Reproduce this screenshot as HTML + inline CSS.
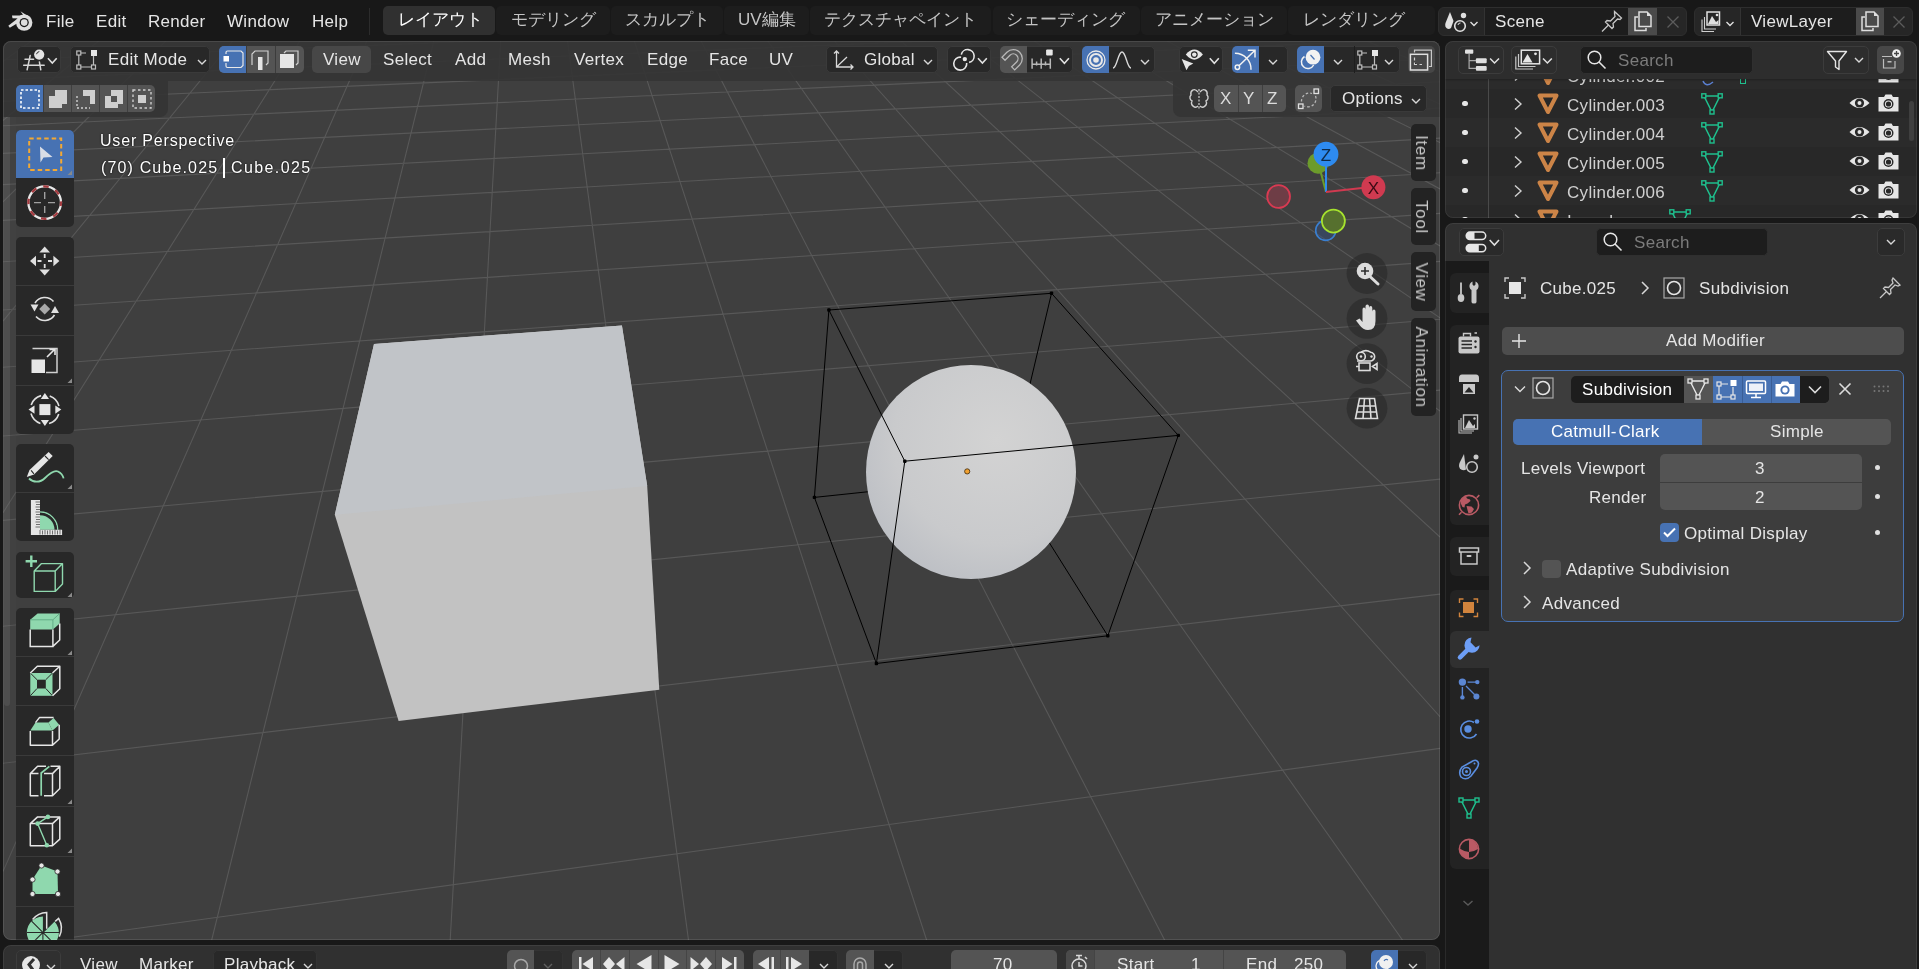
<!DOCTYPE html>
<html><head><meta charset="utf-8">
<style>
*{box-sizing:border-box;margin:0;padding:0}
html,body{width:1919px;height:969px;overflow:hidden;background:#181818;font-family:"Liberation Sans",sans-serif;color:#e5e5e5;font-size:16px}
.a{position:absolute}
.t{position:absolute;white-space:nowrap;line-height:1;font-size:17px;letter-spacing:.3px;will-change:transform}
.jp{font-size:17px;color:#c4c4c4;letter-spacing:0}
.b{position:absolute;border-radius:5px}
.ic{position:absolute;overflow:visible}
#vp{position:absolute;left:3px;top:41px;width:1437px;height:899px;border-radius:8px;background:#3f3f3f;overflow:hidden}
#ol{position:absolute;left:1445px;top:41px;width:472px;height:177px;border-radius:8px;background:#282828;overflow:hidden}
#pr{position:absolute;left:1445px;top:223px;width:472px;height:760px;border-radius:8px;background:#303030;overflow:hidden}
#tl{position:absolute;left:3px;top:945px;width:1437px;height:40px;border-radius:8px;background:#303030;overflow:hidden}
</style></head><body>
<!-- TOPBAR -->
<div id="top">
<svg class="a" style="left:6px;top:9px" width="30" height="24" viewBox="6 9 30 24">
<g fill="#dedede">
<circle cx="24.2" cy="22.6" r="8.2"/>
<path d="M20.5 11.2L30 17.5L27 20.5Z"/>
<path d="M12 15.5L24 15.5L23 18.5L12.5 18.2Z" />
<path d="M8.3 25.8L17 19L19.5 22L9.8 27.8Z"/>
</g>
<circle cx="24.2" cy="22.6" r="4.6" fill="#181818"/>
<circle cx="24.2" cy="22.6" r="3.3" fill="#dedede"/>
</svg>
<div class="t" style="left:46px;top:12.6px">File</div>
<div class="t" style="left:96px;top:12.6px">Edit</div>
<div class="t" style="left:148px;top:12.6px">Render</div>
<div class="t" style="left:227px;top:12.6px">Window</div>
<div class="t" style="left:312px;top:12.6px">Help</div>
<div class="a" style="left:369px;top:8px;width:1px;height:27px;background:#2c2c2c"></div>
<div class="a" style="left:383px;top:6px;width:112px;height:29px;border-radius:5px;background:#303030"></div>
<div class="a" style="left:496px;top:6px;width:114px;height:29px;border-radius:5px;background:#1d1d1d"></div>
<div class="a" style="left:611px;top:6px;width:112px;height:29px;border-radius:5px;background:#1d1d1d"></div>
<div class="a" style="left:724px;top:6px;width:85px;height:29px;border-radius:5px;background:#1d1d1d"></div>
<div class="a" style="left:810px;top:6px;width:181px;height:29px;border-radius:5px;background:#1d1d1d"></div>
<div class="a" style="left:993px;top:6px;width:147px;height:29px;border-radius:5px;background:#1d1d1d"></div>
<div class="a" style="left:1141px;top:6px;width:146px;height:29px;border-radius:5px;background:#1d1d1d"></div>
<div class="a" style="left:1288px;top:6px;width:147px;height:29px;border-radius:5px;background:#1d1d1d"></div>
<div class="t jp" style="left:398px;top:11px;color:#fff">レイアウト</div>
<div class="t jp" style="left:511px;top:11px">モデリング</div>
<div class="t jp" style="left:625px;top:11px">スカルプト</div>
<div class="t jp" style="left:738px;top:11px">UV編集</div>
<div class="t jp" style="left:824px;top:11px">テクスチャペイント</div>
<div class="t jp" style="left:1006px;top:11px">シェーディング</div>
<div class="t jp" style="left:1155px;top:11px">アニメーション</div>
<div class="t jp" style="left:1303px;top:11px">レンダリング</div>
<!-- scene -->
<div class="a" style="left:1438px;top:7.3px;width:249px;height:28.5px;border-radius:6px;background:#262626;border:1px solid #2e2e2e"></div>
<div class="a" style="left:1483.5px;top:8px;width:144.5px;height:27px;background:#1d1d1d;border-left:1px solid #333"></div>
<div class="a" style="left:1628px;top:8px;width:29px;height:27px;background:#4a4a4a"></div>
<svg class="ic" style="left:1442px;top:9px" width="40" height="24" viewBox="0 0 40 24"><path d="M8 3L3.5 14Q2.5 18 5 19.5Q7 20.5 9 19L11.5 12Z" fill="#e0e0e0"/><circle cx="21.5" cy="6.5" r="2.7" fill="#e0e0e0"/><circle cx="18" cy="17" r="5.3" stroke="#e0e0e0" stroke-width="1.6" fill="#262626"/><path d="M16 16A2.3 2.3 0 0 1 18.5 14" stroke="#e0e0e0" stroke-width="1" fill="none"/><path d="M28.5 13L32 16.5L35.5 13" stroke="#e0e0e0" stroke-width="1.4" fill="none"/></svg>
<div class="t" style="left:1495px;top:12.8px">Scene</div>
<svg class="ic" style="left:1600px;top:10px" width="24" height="22" viewBox="0 0 24 22"><path d="M14.5 1.5L21.5 8L20 9.5L17.5 9L13 13.5L13.5 17L12 18.5L5.5 12L7 10.5L10.5 11L15 6.5L14.5 3.5Z" stroke="#c8c8c8" stroke-width="1.3" fill="none"/><path d="M8.5 15L2 21.5" stroke="#c8c8c8" stroke-width="1.3"/></svg>
<svg class="ic" style="left:1632px;top:10px" width="22" height="22" viewBox="0 0 22 22"><path d="M6 7H3V20.5H14V18" stroke="#dedede" stroke-width="1.5" fill="none"/><path d="M7 2H15L19 6V16.5H7Z" stroke="#dedede" stroke-width="1.5" fill="none"/><path d="M15 2V6H19Z" fill="#dedede"/></svg>
<svg class="ic" style="left:1666px;top:15px" width="14" height="14"><path d="M1.5 1.5L12.5 12.5M12.5 1.5L1.5 12.5" stroke="#5c5c5c" stroke-width="1.3"/></svg>
<div class="a" style="left:1694px;top:7.3px;width:219px;height:28.5px;border-radius:6px;background:#262626;border:1px solid #2e2e2e"></div>
<div class="a" style="left:1739.5px;top:8px;width:116px;height:27px;background:#1d1d1d;border-left:1px solid #333"></div>
<div class="a" style="left:1855.5px;top:8px;width:28.5px;height:27px;background:#4a4a4a"></div>
<svg class="ic" style="left:1700px;top:9px" width="40" height="24" viewBox="0 0 40 24"><path d="M4.5 8V20H16M2 10.5V22.5H14" stroke="#cfcfcf" stroke-width="1.1" fill="none"/><rect x="7" y="3" width="12.5" height="13" stroke="#e0e0e0" stroke-width="1.5" fill="none"/><path d="M8 15L12 7L16 13L18.5 11V15Z" fill="#e0e0e0"/><circle cx="17" cy="6" r="1.3" fill="#e0e0e0"/><path d="M26.5 13L30 16.5L33.5 13" stroke="#e0e0e0" stroke-width="1.4" fill="none"/></svg>
<div class="t" style="left:1751px;top:12.8px">ViewLayer</div>
<svg class="ic" style="left:1859px;top:10px" width="22" height="22" viewBox="0 0 22 22"><path d="M6 7H3V20.5H14V18" stroke="#dedede" stroke-width="1.5" fill="none"/><path d="M7 2H15L19 6V16.5H7Z" stroke="#dedede" stroke-width="1.5" fill="none"/><path d="M15 2V6H19Z" fill="#dedede"/></svg>
<svg class="ic" style="left:1892px;top:15px" width="14" height="14"><path d="M1.5 1.5L12.5 12.5M12.5 1.5L1.5 12.5" stroke="#5c5c5c" stroke-width="1.3"/></svg>
</div>
<!-- VIEWPORT -->
<div id="vp">
<svg class="a" style="left:-3px;top:-41px" width="1440" height="940" viewBox="0 0 1440 940">
<path d="M3.0 61.4L31.4 41.0M3.0 120.5L98.6 41.0M3.0 201.8L165.7 41.0M3.0 321.1L232.8 41.0M3.0 512.8L299.9 41.0M3.0 871.6L366.9 41.0M211.7 940.0L433.8 41.0M450.2 940.0L500.7 41.0M688.5 940.0L567.5 41.0M926.6 940.0L634.3 41.0M1164.6 940.0L701.1 41.0M1402.5 940.0L767.8 41.0M1440.0 716.7L834.5 41.0M1440.0 537.1L901.1 41.0M1440.0 411.1L967.6 41.0M1440.0 317.8L1034.2 41.0M1440.0 246.0L1100.6 41.0M1440.0 188.9L1167.1 41.0M1440.0 142.5L1233.4 41.0M1440.0 104.1L1299.8 41.0M1440.0 71.6L1366.1 41.0M1440.0 44.0L1432.3 41.0M52.8 940.0L1440.0 748.4M3.0 763.2L1440.0 594.1M3.0 626.3L1440.0 479.1M3.0 520.4L1440.0 390.1M3.0 436.0L1440.0 319.3M3.0 367.2L1440.0 261.4M3.0 310.0L1440.0 213.4M3.0 261.7L1440.0 172.8M3.0 220.4L1440.0 138.1M3.0 184.6L1440.0 108.1M3.0 153.4L1440.0 81.8M3.0 125.8L1440.0 58.7M3.0 101.4L1375.1 41.0M3.0 79.5L929.7 41.0M5.2 59.8L482.2 41.0M31.4 41.0L32.6 41.0" stroke="#585858" stroke-width="1.1" fill="none"/>
<polygon points="374,344 621.9,325.4 647.2,486 659.3,689.8 398.6,720.9 334.8,514.8" fill="#c2c2c2"/>
<polygon points="374,344 621.9,325.4 647.2,486 334.8,514.8" fill="#c1c4c8"/>
<defs><radialGradient id="sg" cx="0.62" cy="0.35" r="0.75"><stop offset="0" stop-color="#d3d3d3"/><stop offset="0.65" stop-color="#c9cacc"/><stop offset="1" stop-color="#babdc3"/></radialGradient></defs>
<path d="M1051.5 293.3L1008 477M814.4 497.4L1008 477M1107.8 635.8L1008 477" stroke="#000" stroke-width="1" fill="none"/>
<ellipse cx="971" cy="472" rx="105" ry="107.1" fill="url(#sg)"/>
<g stroke="#000" stroke-width="1" fill="none">
<path d="M828.9 310L1051.5 293.3L1178.3 435.4L904.8 461.2Z M814.4 497.4L876.4 663.5L1107.8 635.8 M828.9 310L814.4 497.4 M904.8 461.2L876.4 663.5 M1178.3 435.4L1107.8 635.8"/>
</g><g fill="#000"><rect x="827.1999999999999" y="308.3" width="3.4" height="3.4" rx="1"/><rect x="1049.8" y="291.6" width="3.4" height="3.4" rx="1"/><rect x="1176.6" y="433.7" width="3.4" height="3.4" rx="1"/><rect x="903.0999999999999" y="459.5" width="3.4" height="3.4" rx="1"/><rect x="812.6999999999999" y="495.7" width="3.4" height="3.4" rx="1"/><rect x="874.6999999999999" y="661.8" width="3.4" height="3.4" rx="1"/><rect x="1106.1" y="634.0999999999999" width="3.4" height="3.4" rx="1"/></g><circle cx="967.2" cy="471.4" r="2.6" fill="#f0a030" stroke="#3a2a10" stroke-width="0.8"/>
</svg>
<div class="a" style="left:-3px;top:-41px;width:1919px;height:969px">
<div class="a" style="left:3px;top:41px;width:1437px;height:40px;background:rgba(52,52,52,.9)"></div>
<div class="a" style="left:3px;top:81px;width:165px;height:36px;border-radius:0 0 8px 0;background:rgba(52,52,52,.9)"></div>
<div class="a" style="left:1173px;top:81px;width:267px;height:36px;border-radius:0 0 0 8px;background:rgba(52,52,52,.9)"></div>
<div class="b" style="left:17px;top:46px;width:44px;height:27px;background:#282828;border:1px solid #3a3a3a"></div>
<svg class="ic" style="left:16px;top:45px" width="50" height="30" viewBox="16 45 50 30"><g stroke="#d6d6d6" stroke-width="1.5" fill="none" stroke-linecap="round"><path d="M25 59.2H33.6M23.7 65.3H44.2M30.2 55.5L27.1 69.8M39.4 61.9L40.8 69.8"/></g><circle cx="39.2" cy="54.6" r="5.1" fill="#e4e4e4"/><path d="M36.5 54.2A3.3 3.3 0 0 1 39.3 51.6" stroke="#282828" stroke-width="1" fill="none"/><path d="M47.9 58.3L52.3 63L56.7 58.3" stroke="#e0e0e0" stroke-width="1.6" fill="none"/></svg>

<div class="b" style="left:70px;top:46px;width:140px;height:27px;background:#282828;border:1px solid #3a3a3a"></div>
<svg class="ic" style="left:76px;top:49px" width="22" height="21" viewBox="0 0 22 21"><g stroke="#bdbdbd" stroke-width="1.2" fill="none"><rect x="0.8" y="2" width="4" height="4"/><rect x="0.8" y="16" width="4" height="4"/><rect x="15.5" y="16" width="4" height="4"/><path d="M2.8 6V16M4.8 18H15.5M17.5 7V16M4.8 4H10"/></g><rect x="15" y="1" width="6" height="6" fill="#e6e6e6"/></svg>
<div class="t" style="left:108px;top:51.2px">Edit Mode</div>
<svg class="ic" style="left:197px;top:59px" width="10" height="6"><path d="M1 1L5 5L9 1" stroke="#d8d8d8" stroke-width="1.4" fill="none"/></svg>
<div class="b" style="left:219px;top:46px;width:85px;height:27px;background:#545454"></div>
<div class="b" style="left:219px;top:46px;width:27px;height:27px;border-radius:5px 0 0 5px;background:#4772b3"></div>
<div class="a" style="left:246px;top:46px;width:1px;height:27px;background:#3c3c3c"></div><div class="a" style="left:275px;top:46px;width:1px;height:27px;background:#3c3c3c"></div>
<svg class="ic" style="left:222px;top:49px" width="22" height="21" viewBox="0 0 22 21"><path d="M4 5V3.5Q4 2 5.5 2H19L21 4V16.5L19 18.5H5.5Q4 18.5 4 17V14" stroke="#e8e8e8" stroke-width="1.2" fill="none"/><rect x="1.5" y="7" width="5.5" height="5.5" fill="#fff"/></svg>
<svg class="ic" style="left:249px;top:49px" width="22" height="21" viewBox="0 0 22 21"><path d="M3 16V5L6 2H19V14L17 16" stroke="#d0d0d0" stroke-width="1.2" fill="none"/><rect x="9" y="8" width="4.5" height="13" fill="#e6e6e6"/></svg>
<svg class="ic" style="left:278px;top:49px" width="22" height="21" viewBox="0 0 22 21"><path d="M6 4L8 2H20V14L18 16" stroke="#d0d0d0" stroke-width="1.2" fill="none"/><rect x="2" y="5" width="14" height="14" fill="#e6e6e6"/></svg>
<div class="b" style="left:312px;top:46px;width:59px;height:27px;background:#474747"></div>
<div class="t" style="left:323px;top:51.2px">View</div>
<div class="t" style="left:383px;top:51.2px">Select</div>
<div class="t" style="left:455px;top:51.2px">Add</div>
<div class="t" style="left:508px;top:51.2px">Mesh</div>
<div class="t" style="left:574px;top:51.2px">Vertex</div>
<div class="t" style="left:647px;top:51.2px">Edge</div>
<div class="t" style="left:709px;top:51.2px">Face</div>
<div class="t" style="left:769px;top:51.2px">UV</div>
<div class="b" style="left:826px;top:46px;width:112px;height:27px;background:#282828;border:1px solid #3a3a3a"></div>
<svg class="ic" style="left:832px;top:48px" width="24" height="24" viewBox="0 0 24 24"><g stroke="#d8d8d8" stroke-width="1.3" fill="none"><path d="M4.5 3V19H21M4.5 19L15 9M2 5.5L4.5 3L7 5.5M18.5 16.5L21 19L18.5 21.5"/></g></svg>
<div class="t" style="left:864px;top:51.2px">Global</div>
<svg class="ic" style="left:923px;top:59px" width="10" height="6"><path d="M1 1L5 5L9 1" stroke="#d8d8d8" stroke-width="1.4" fill="none"/></svg>
<div class="b" style="left:947px;top:46px;width:44px;height:27px;background:#282828;border:1px solid #3a3a3a"></div>
<svg class="ic" style="left:945px;top:45px" width="50" height="30" viewBox="945 45 50 30"><g stroke="#e6e6e6" stroke-width="1.6" fill="none"><path d="M961.1 57.2A6.5 6.5 0 1 0 966.7 63"/><path d="M969.1 62.4A6.5 6.5 0 1 0 961.3 54.6"/></g><circle cx="964.8" cy="59.1" r="2.2" fill="#e6e6e6"/><path d="M978 58.3L982.4 63L986.8 58.3" stroke="#e0e0e0" stroke-width="1.6" fill="none"/></svg>

<div class="b" style="left:1000px;top:46px;width:73px;height:27px;background:#282828;border:1px solid #3a3a3a"></div>
<div class="b" style="left:1000px;top:46px;width:27px;height:27px;border-radius:5px 0 0 5px;background:#545454"></div>
<svg class="ic" style="left:998px;top:45px" width="76" height="30" viewBox="998 45 76 30"><path transform="translate(1013.3 58.6) rotate(45)" d="M-9 0A9 9 0 0 1 9 0V7H4.7V0A4.7 4.7 0 0 0 -4.7 0V7H-9Z" stroke="#b8b8b8" stroke-width="1.3" fill="none"/></svg>
<svg class="ic" style="left:1025px;top:45px" width="50" height="30" viewBox="1025 45 50 30"><g stroke="#b8b8b8" stroke-width="1.5"><path d="M1032.1 58.5V68.8M1041.2 58.5V68.8M1050.3 58.5V68.8M1032.1 64.2H1050.3M1036.6 61.6V65.6M1045.5 61.6V65.6"/></g><rect x="1046.1" y="49.4" width="6.6" height="6.1" rx="1" fill="#e6e6e6"/><path d="M1059.8 58.3L1064.4 63.3L1068.9 58.3" stroke="#e0e0e0" stroke-width="1.6" fill="none"/></svg>

<div class="b" style="left:1082px;top:46px;width:73px;height:27px;background:#282828;border:1px solid #3a3a3a"></div>
<div class="b" style="left:1082px;top:46px;width:27px;height:27px;border-radius:5px 0 0 5px;background:#4772b3"></div>
<svg class="ic" style="left:1084px;top:48px" width="24" height="24" viewBox="0 0 24 24"><circle cx="12" cy="12" r="9" stroke="#e8e8e8" stroke-width="1.3" fill="none"/><circle cx="12" cy="12" r="6" stroke="#e8e8e8" stroke-width="2" fill="none"/><circle cx="12" cy="12" r="2.8" fill="#e8e8e8"/></svg>
<svg class="ic" style="left:1111px;top:49px" width="22" height="22" viewBox="0 0 22 22"><path d="M2 19C6 19 7 3 11 3C15 3 16 19 20 19" stroke="#d8d8d8" stroke-width="1.4" fill="none"/></svg>
<svg class="ic" style="left:1140px;top:59px" width="10" height="6"><path d="M1 1L5 5L9 1" stroke="#d8d8d8" stroke-width="1.4" fill="none"/></svg>
<div class="b" style="left:1179px;top:46px;width:44px;height:27px;background:#282828;border:1px solid #3a3a3a"></div>
<svg class="ic" style="left:1175px;top:45px" width="50" height="30" viewBox="1175 45 50 30"><path d="M1185.8 54.6Q1194.3 44.5 1202.9 54.6Q1194.3 64.7 1185.8 54.6Z" fill="#e6e6e6"/><circle cx="1194.3" cy="54.6" r="3.4" fill="#282828"/><circle cx="1194.3" cy="54.6" r="2.2" fill="#e6e6e6"/><path d="M1181.7 58.9L1193.3 63.6L1188.9 66L1186.5 70.2Z" fill="#e6e6e6"/><path d="M1209.8 58.2L1214.3 63.2L1218.8 58.2" stroke="#e0e0e0" stroke-width="1.6" fill="none"/></svg>

<div class="b" style="left:1232px;top:46px;width:56px;height:27px;background:#282828;border:1px solid #3a3a3a"></div>
<div class="b" style="left:1232px;top:46px;width:27px;height:27px;border-radius:5px 0 0 5px;background:#4772b3"></div>
<svg class="ic" style="left:1230px;top:45px" width="30" height="30" viewBox="1230 45 30 30"><g stroke="#f2f2f2" stroke-width="1.5" fill="none"><path d="M1234.9 53.2A16 16 0 0 1 1251 69.8"/><circle cx="1237.4" cy="67.3" r="2.2"/><path d="M1239 65.7L1255 50.3M1247.8 50.3H1255V57.6"/></g></svg>
<svg class="ic" style="left:1268px;top:59px" width="10" height="6"><path d="M1 1L5 5L9 1" stroke="#d8d8d8" stroke-width="1.4" fill="none"/></svg>
<div class="b" style="left:1297px;top:46px;width:103px;height:27px;background:#282828;border:1px solid #3a3a3a"></div>
<div class="b" style="left:1297px;top:46px;width:27px;height:27px;border-radius:5px 0 0 5px;background:#4772b3"></div>
<svg class="ic" style="left:1295px;top:45px" width="30" height="30" viewBox="1295 45 30 30"><circle cx="1313" cy="57.2" r="7.4" fill="#f2f2f2"/><path d="M1310.5 55L1314.5 59.5" stroke="#4772b3" stroke-width="1.2"/><path d="M1304.5 56.5A6.5 6.5 0 1 0 1313.7 65" stroke="#f2f2f2" stroke-width="1.5" fill="none"/></svg>
<svg class="ic" style="left:1333px;top:59px" width="10" height="6"><path d="M1 1L5 5L9 1" stroke="#d8d8d8" stroke-width="1.4" fill="none"/></svg>
<div class="a" style="left:1354px;top:46px;width:1px;height:27px;background:#1e1e1e"></div>
<svg class="ic" style="left:1357px;top:49px" width="22" height="21" viewBox="0 0 22 21"><g stroke="#bdbdbd" stroke-width="1.2" fill="none"><rect x="0.8" y="2" width="4" height="4"/><rect x="0.8" y="16" width="4" height="4"/><rect x="15.5" y="16" width="4" height="4"/><path d="M2.8 6V16M4.8 18H15.5M17.5 7V16M4.8 4H10"/></g><rect x="15" y="1" width="6" height="6" fill="#e6e6e6"/></svg>
<svg class="ic" style="left:1384px;top:59px" width="10" height="6"><path d="M1 1L5 5L9 1" stroke="#d8d8d8" stroke-width="1.4" fill="none"/></svg>
<div class="b" style="left:1408px;top:46px;width:27px;height:27px;background:#474747"></div>
<svg class="ic" style="left:1405px;top:45px" width="30" height="30" viewBox="1405 45 30 30"><path d="M1414.5 52.5V50.2H1431.4V66.5H1429" stroke="#c8c8c8" stroke-width="1.2" fill="none"/><rect x="1410.4" y="54.3" width="17.2" height="15.7" stroke="#e0e0e0" stroke-width="1.5" fill="none"/><path d="M1414.5 57.5V60.5M1414.5 62.5V64.5H1417M1419.5 64.5H1422" stroke="#d0d0d0" stroke-width="1.2"/></svg>
<div class="b" style="left:16px;top:85px;width:139px;height:27px;background:#545454"></div>
<div class="b" style="left:16px;top:85px;width:27px;height:27px;border-radius:5px 0 0 5px;background:#4772b3"></div>
<div class="a" style="left:43px;top:85px;width:1px;height:27px;background:#3f3f3f"></div>
<div class="a" style="left:71px;top:85px;width:1px;height:27px;background:#3f3f3f"></div>
<div class="a" style="left:99px;top:85px;width:1px;height:27px;background:#3f3f3f"></div>
<div class="a" style="left:127px;top:85px;width:1px;height:27px;background:#3f3f3f"></div>
<svg class="ic" style="left:18px;top:87px" width="24" height="24" viewBox="0 0 24 24"><rect x="3" y="3" width="18" height="18" stroke="#fff" stroke-width="1.6" stroke-dasharray="2.5 2" fill="none"/></svg>
<svg class="ic" style="left:46px;top:87px" width="24" height="24" viewBox="0 0 24 24"><path d="M9 3H21V17H16V21H3V9H9Z" fill="#cfcfcf"/></svg>
<svg class="ic" style="left:74px;top:87px" width="24" height="24" viewBox="0 0 24 24"><path d="M9 3H21V17H16V9H9Z" fill="#cfcfcf"/><path d="M3 9V21H16" stroke="#cfcfcf" stroke-width="1.4" stroke-dasharray="2 2" fill="none"/></svg>
<svg class="ic" style="left:102px;top:87px" width="24" height="24" viewBox="0 0 24 24"><path d="M9 3H21V17H16V21H3V9H9ZM9 9V15H15V9Z" fill="#cfcfcf" fill-rule="evenodd"/></svg>
<svg class="ic" style="left:130px;top:87px" width="24" height="24" viewBox="0 0 24 24"><rect x="3" y="3" width="18" height="18" stroke="#cfcfcf" stroke-width="1.4" stroke-dasharray="2.5 2.5" fill="none"/><rect x="8" y="8" width="8" height="8" fill="#cfcfcf"/></svg>
<svg class="ic" style="left:1187px;top:87px" width="24" height="24" viewBox="0 0 24 24"><path d="M11 5C7 0 3 4 4 8C2 10 3 13 5 14C3 18 8 22 11 19M13 5C17 0 21 4 20 8C22 10 21 13 19 14C21 18 16 22 13 19" stroke="#cfcfcf" stroke-width="1.4" fill="none"/><path d="M12 2V22" stroke="#cfcfcf" stroke-width="1.2" stroke-dasharray="2 1.5"/></svg>
<div class="b" style="left:1214px;top:85px;width:72px;height:27px;background:#545454"></div>
<div class="a" style="left:1238px;top:85px;width:1px;height:27px;background:#3f3f3f"></div><div class="a" style="left:1262px;top:85px;width:1px;height:27px;background:#3f3f3f"></div>
<div class="t" style="left:1220px;top:89.5px;color:#dcdcdc">X</div>
<div class="t" style="left:1243px;top:89.5px;color:#dcdcdc">Y</div>
<div class="t" style="left:1267px;top:89.5px;color:#dcdcdc">Z</div>
<div class="b" style="left:1295px;top:85px;width:27px;height:27px;background:#545454"></div>
<svg class="ic" style="left:1295px;top:85px" width="28" height="28" viewBox="1295 85 28 28"><rect x="1298.5" y="104" width="4.5" height="4.5" stroke="#e0e0e0" stroke-width="1.3" fill="none"/><rect x="1314" y="89" width="4.5" height="4.5" stroke="#e0e0e0" stroke-width="1.3" fill="none"/><path d="M1301.5 101.5A8 8 0 0 1 1312 93.5M1315.5 96A8 8 0 0 1 1304.5 106" stroke="#b8b8b8" stroke-width="1.3" stroke-dasharray="2.5 2" fill="none"/></svg>
<div class="b" style="left:1330px;top:85px;width:97px;height:27px;background:#282828;border:1px solid #3a3a3a"></div>
<div class="t" style="left:1342px;top:89.5px">Options</div>
<svg class="ic" style="left:1411px;top:98px" width="10" height="6"><path d="M1 1L5 5L9 1" stroke="#d8d8d8" stroke-width="1.4" fill="none"/></svg>
</div>
<div class="a" style="left:-3px;top:-41px;width:1919px;height:969px">
<div class="a" style="left:3px;top:117px;width:13px;height:823px;background:rgba(70,70,70,.25)"></div>
<div class="a" style="left:4px;top:117px;width:6px;height:589px;border-radius:0 0 3px 3px;background:rgba(255,255,255,.07)"></div>
<div class="b" style="left:16px;top:130px;width:58px;height:97px;background:#282828"></div>
<div class="b" style="left:16px;top:130px;width:58px;height:48px;border-radius:5px 5px 0 0;background:#4772b3"></div>
<div class="b" style="left:16px;top:237px;width:58px;height:197px;background:#282828"></div><div class="a" style="left:16px;top:285px;width:58px;height:1px;background:#3a3a3a"></div><div class="a" style="left:16px;top:335px;width:58px;height:1px;background:#3a3a3a"></div><div class="a" style="left:16px;top:385px;width:58px;height:1px;background:#3a3a3a"></div>
<div class="b" style="left:16px;top:444px;width:58px;height:97px;background:#282828"></div><div class="a" style="left:16px;top:492px;width:58px;height:1px;background:#3a3a3a"></div>
<div class="b" style="left:16px;top:552px;width:58px;height:46px;background:#282828"></div>
<div class="b" style="left:16px;top:608px;width:58px;height:340px;background:#282828"></div>
<div class="a" style="left:16px;top:656px;width:58px;height:1px;background:#3a3a3a"></div>
<div class="a" style="left:16px;top:705px;width:58px;height:1px;background:#3a3a3a"></div>
<div class="a" style="left:16px;top:755px;width:58px;height:1px;background:#3a3a3a"></div>
<div class="a" style="left:16px;top:806px;width:58px;height:1px;background:#3a3a3a"></div>
<div class="a" style="left:16px;top:856px;width:58px;height:1px;background:#3a3a3a"></div>
<div class="a" style="left:16px;top:906px;width:58px;height:1px;background:#3a3a3a"></div>
<svg class="a" style="left:0;top:0" width="80" height="940" viewBox="0 0 80 940">
<rect x="29.2" y="138.4" width="32" height="31.5" stroke="#f3a833" stroke-width="2" stroke-dasharray="4.5 3" fill="none"/>
<path d="M40 146.5L52.5 157L43.5 157.5L40.5 162.5Z" fill="#d9dde6"/>
<path d="M72 175L67.5 175L72 170.5Z" fill="#8a8a8a"/>
<circle cx="44.7" cy="202.6" r="16.3" stroke="#e8e8e8" stroke-width="2.3" fill="none"/>
<circle cx="44.7" cy="202.6" r="16.3" stroke="#a43a3f" stroke-width="2.3" stroke-dasharray="5.6 7.2" stroke-dashoffset="2" fill="none"/>
<path d="M44.7 192V199M44.7 206V213M34 202.6H41M48 202.6H55" stroke="#a0a0a0" stroke-width="1.4"/>
<g fill="#e0e0e0"><path d="M44.7 246.5L50 252.5H39.4Z"/><path d="M44.7 275.5L50 269.5H39.4Z"/><path d="M30 261L36 255.7V266.3Z"/><path d="M59.4 261L53.4 255.7V266.3Z"/></g>
<path d="M44.7 254V258M44.7 264V268M37.5 261H41.5M48 261H52" stroke="#e0e0e0" stroke-width="1.8"/>
<path d="M44.7 303.5L50.2 309L44.7 314.5L39.2 309Z" fill="#a8a8a8"/>
<path d="M35 303A11.5 11.5 0 0 1 53.5 301.5M54.5 315A11.5 11.5 0 0 1 36 316.5" stroke="#e0e0e0" stroke-width="1.6" fill="none"/>
<path d="M30.5 304.5H38.5L34.5 311.5Z" fill="#e0e0e0"/><path d="M51 313H59L55 306Z" fill="#e0e0e0"/>
<path d="M32.5 348.5H57V372.5H46" stroke="#d0d0d0" stroke-width="1.5" fill="none"/>
<rect x="31.5" y="359.5" width="13.5" height="13.5" fill="#e6e6e6"/>
<path d="M47 357L54.5 349.5M49.5 349.5H55V355" stroke="#e6e6e6" stroke-width="1.6" fill="none"/>
<path d="M72 383L67.5 383L72 378.5Z" fill="#8a8a8a"/>
<circle cx="44.9" cy="409.6" r="14.5" stroke="#e0e0e0" stroke-width="1.6" stroke-dasharray="14 8.8" stroke-dashoffset="-4.4" fill="none"/>
<rect x="39.4" y="404.1" width="11" height="11" fill="#e6e6e6"/>
<g fill="#e6e6e6"><path d="M44.9 393L49 399H40.8Z"/><path d="M44.9 426L49 420H40.8Z"/><path d="M28.5 409.6L34.5 405.5V413.7Z"/><path d="M61.3 409.6L55.3 405.5V413.7Z"/></g>
<path d="M26.8 477.1L29.5 470L48.6 451.9L52.7 455.9L34 474.5Z" fill="#e6e6e6"/><path d="M31.1 470.3L33.9 473.9M45 456L48.6 459.6" stroke="#282828" stroke-width="1.1"/>
<path d="M29 478.5C33 482.5 40 483 45 478C50 473 55 470 58 471.5C61 473 63 476 63.6 478.4" stroke="#8fd8ae" stroke-width="1.8" fill="none"/>
<path d="M72 489L67.5 489L72 484.5Z" fill="#8a8a8a"/>
<path d="M40 515.2A14.5 14.5 0 0 1 54.5 529.7H40Z" fill="#8fd8ae"/>
<path d="M40 512A17.7 17.7 0 0 1 57.7 529.7" stroke="#8fd8ae" stroke-width="1.3" fill="none"/>
<path d="M40 513.5A16.2 16.2 0 0 1 56.2 529.7" stroke="#282828" stroke-width="1.4" fill="none"/>
<path d="M30.9 499.9H40V529.7H62.1V535H30.9Z" fill="#e6e6e6"/>
<path d="M35.5 502H40M36 504.5H40M35.5 507H40M36 509.5H40M35.5 512H40M36 514.5H40M35.5 517H40M36 519.5H40M35.5 522H40M36 524.5H40M35.5 527H40M40 534.5V530M42.5 534.5V530.5M45 534.5V530M47.5 534.5V530.5M50 534.5V530M52.5 534.5V530.5M55 534.5V530M57.5 534.5V530.5M60 534.5V530" stroke="#3a3a3a" stroke-width="0.7"/>
<path d="M34.2 571H55.2V591.4H34.2Z M34.2 571L41.5 563.6H62.5L55.2 571 M62.5 563.6V584.0L55.2 591.4" stroke="#8fd8ae" stroke-width="1.4" stroke-linejoin="round" fill="none"/>
<path d="M25.6 561.3H37M31.3 555.6V567" stroke="#8fd8ae" stroke-width="2.4"/>
<path d="M72 597L67.5 597L72 592.5Z" fill="#8a8a8a"/>
<path d="M30.2 629.4V619.8L37.6 613.5H59.7V623.5L52.9 629.4Z" fill="#8fd8ae"/><path d="M30.2 619.8H52.9V629.4M52.9 619.8L59.7 613.5" stroke="#5fa882" stroke-width="0.9" fill="none"/>
<path d="M30.2 629.4V646.4H52.9V629.4M52.9 646.4L59.7 640V623.5" stroke="#e6e6e6" stroke-width="1.5" fill="none"/>
<path d="M72 655L67.5 655L72 650.5Z" fill="#8a8a8a"/>
<rect x="30.3" y="673" width="22.2" height="22.8" fill="#8fd8ae"/><rect x="37" y="679.7" width="8.8" height="8.8" fill="#282828"/>
<path d="M30.3 673L37 679.7M52.5 673L45.8 679.7M30.3 695.8L37 688.5M52.5 695.8L45.8 688.5" stroke="#282828" stroke-width="1"/>
<path d="M30.3 673L37.3 666.3H59.8L52.5 673M59.8 666.3V688.8L52.5 695.8" stroke="#e6e6e6" stroke-width="1.5" stroke-linejoin="round" fill="none"/>
<path d="M30.3 730.5L35.5 722.6H48.4L52.5 730.5Z" fill="#8fd8ae"/><path d="M48.4 722.6L53.6 718L59.2 724.7L52.5 730.5Z" fill="#8fd8ae"/>
<path d="M30.3 731V745.3H52.5V731M52.5 745.3L59.2 739V724.7M35.5 722.6L39.6 717.4H53.6" stroke="#e6e6e6" stroke-width="1.5" stroke-linejoin="round" fill="none"/>
<path d="M38.5 773.6H30.3V795.8H38.5M44 795.8H52.5V773.6H44M30.3 773.6L37.6 766.3H46M50.5 766.3H59.8L52.5 773.6M59.8 766.3V788.5L52.5 795.8" stroke="#e6e6e6" stroke-width="1.5" stroke-linejoin="round" fill="none"/>
<path d="M41.2 795.8V773L49.4 766.3" stroke="#8fd8ae" stroke-width="1.7" fill="none"/>
<path d="M72 804L67.5 804L72 799.5Z" fill="#8a8a8a"/>
<path d="M30.3 823.6H52.5V845.8H30.3Z M30.3 823.6L37.6 816.9H59.8L52.5 823.6 M59.8 816.9V839.0999999999999L52.5 845.8" stroke="#e6e6e6" stroke-width="1.5" stroke-linejoin="round" fill="none"/>
<path d="M47.9 816.9L37.6 823.6L46.8 845.3" stroke="#8fd8ae" stroke-width="1.4" fill="none"/>
<g fill="#8fd8ae"><circle cx="47.9" cy="816.9" r="2.3"/><circle cx="37.6" cy="823.6" r="2.3"/><circle cx="46.8" cy="845.3" r="2.3"/></g>
<path d="M72 853L67.5 853L72 848.5Z" fill="#8a8a8a"/>
<path d="M41.5 865.5L57.5 871.5L58 894H32.5L32.5 879.5Z" fill="#8fd8ae"/>
<g fill="#e6e6e6" stroke="#282828" stroke-width="0.8"><circle cx="41.5" cy="865.5" r="2.6"/><circle cx="57.5" cy="871.5" r="2.6"/><circle cx="58" cy="894" r="2.6"/><circle cx="32.5" cy="894" r="2.6"/><circle cx="32.5" cy="879.5" r="2.6"/></g>
<path d="M42.9 932.5V916.5A16 16 0 1 0 54.2 921.2Z" fill="#8fd8ae"/>
<path d="M27 932.5H59M31.6 921.2L54.2 943.8M54.2 921.2L31.6 943.8M42.9 932.5V945" stroke="#282828" stroke-width="1.1"/>
<path d="M32.6 919.5A19 19 0 0 1 46.7 912.5V928.7" stroke="#e0e0e0" stroke-width="1.5" fill="none"/>
<path d="M55.2 921.4L58.6 918.4A19 19 0 0 1 59.3 936.7" stroke="#e0e0e0" stroke-width="1.5" fill="none"/>
</svg>
</div>
<div class="a" style="left:-3px;top:-41px;width:1919px;height:969px">
<div class="t" style="left:100px;top:133.3px;font-size:16px;letter-spacing:.82px;color:#fff;text-shadow:0 0 2px #000">User Perspective</div>
<div class="t" style="left:100.5px;top:160.1px;font-size:16px;letter-spacing:1.15px;color:#fff;text-shadow:0 0 2px #000">(70) Cube.025</div><div class="t" style="left:230.5px;top:160.1px;font-size:16px;letter-spacing:1.4px;color:#fff;text-shadow:0 0 2px #000">Cube.025</div>
<div class="a" style="left:223px;top:158px;width:2px;height:20px;background:#fff"></div>
<svg class="a" style="left:1240px;top:120px" width="200" height="320" viewBox="1240 120 200 320">
<circle cx="1325.7" cy="230.4" r="10" fill="rgba(50,80,130,.45)" stroke="#3a7fd0" stroke-width="1.6"/>
<circle cx="1333.4" cy="221.1" r="11.5" fill="#56702e" stroke="#a6e22e" stroke-width="1.8"/>
<circle cx="1278.6" cy="196.5" r="11.4" fill="#6e3d46" stroke="#d93a52" stroke-width="1.8"/>
<circle cx="1318" cy="163.2" r="10.5" fill="#6c9b2b"/>
<path d="M1326 192L1320.7 172" stroke="#6c9b2b" stroke-width="2"/>
<path d="M1326 192V165" stroke="#2e8bf0" stroke-width="2"/>
<path d="M1326 192L1362 188" stroke="#d03a50" stroke-width="2.2"/>
<circle cx="1326" cy="154.2" r="12.4" fill="#2e8bf0"/>
<circle cx="1373.4" cy="187.2" r="12" fill="#d03a50"/>
<text x="1326" y="160.5" text-anchor="middle" font-family="Liberation Sans" font-size="17" fill="#0f2a48">Z</text>
<text x="1373.4" y="193.5" text-anchor="middle" font-family="Liberation Sans" font-size="17" fill="#3a0a14">X</text>
<circle cx="1367" cy="273.5" r="20.4" fill="rgba(38,38,38,.55)"/>
<circle cx="1367" cy="318.4" r="20.4" fill="rgba(38,38,38,.55)"/>
<circle cx="1367" cy="363.6" r="20.4" fill="rgba(38,38,38,.55)"/>
<circle cx="1367" cy="408.2" r="20.4" fill="rgba(38,38,38,.55)"/>
<circle cx="1365" cy="271" r="8.3" fill="#dcdcdc"/><path d="M1370.5 277L1378 284" stroke="#dcdcdc" stroke-width="3" stroke-linecap="round"/><path d="M1361 271H1369M1365 267V275" stroke="#2c2c2c" stroke-width="1.6"/>
<path d="M1356 320.5L1359.5 318.5L1362.5 322V309.5Q1362.5 307.5 1364 307.5Q1365.5 307.5 1365.5 309.5V306.5Q1365.5 304.5 1367.3 304.5Q1369 304.5 1369 306.5V308Q1369 306 1370.7 306Q1372.3 306 1372.3 308V311.5Q1372.5 309.5 1374 309.5Q1375.5 309.5 1375.5 311.5V321Q1375.5 330 1368 330Q1363 330 1359.5 325Z" fill="#dcdcdc"/>
<g stroke="#dcdcdc" stroke-width="1.6" fill="none"><circle cx="1361" cy="356.5" r="4.3"/><path d="M1361 352.2Q1366 349 1370.5 352.2A4.3 4.3 0 1 1 1370 361H1357"/><rect x="1359" y="363" width="11" height="7.5"/><path d="M1356 366.5H1359M1372.5 366.5L1377 363.5V369.5Z"/></g><circle cx="1361" cy="356.5" r="1.2" fill="#dcdcdc"/><circle cx="1371.5" cy="356.5" r="1.2" fill="#dcdcdc"/>
<g stroke="#dcdcdc" stroke-width="1.6" fill="none"><path d="M1359.5 398.5H1374.5L1377.5 418.5H1355.5Z M1358 406H1376 M1357 412H1377 M1364.5 398.5L1363 418.5 M1369.5 398.5L1371 418.5"/></g>
</svg>
<div class="b" style="left:1410.5px;top:124px;width:25.5px;height:57px;background:#232323"></div>
<div class="t" style="left:1429.5px;top:152.5px;transform:translate(-50%,0) rotate(90deg);transform-origin:50% 0;font-size:17px;color:#c8c8c8;letter-spacing:.6px">Item</div>
<div class="b" style="left:1410.5px;top:188px;width:25.5px;height:57px;background:#232323"></div>
<div class="t" style="left:1429.5px;top:216.5px;transform:translate(-50%,0) rotate(90deg);transform-origin:50% 0;font-size:17px;color:#c8c8c8;letter-spacing:.6px">Tool</div>
<div class="b" style="left:1410.5px;top:252px;width:25.5px;height:59px;background:#232323"></div>
<div class="t" style="left:1429.5px;top:281.5px;transform:translate(-50%,0) rotate(90deg);transform-origin:50% 0;font-size:17px;color:#c8c8c8;letter-spacing:.6px">View</div>
<div class="b" style="left:1410.5px;top:318px;width:25.5px;height:98px;background:#232323"></div>
<div class="t" style="left:1429.5px;top:367.0px;transform:translate(-50%,0) rotate(90deg);transform-origin:50% 0;font-size:17px;color:#c8c8c8;letter-spacing:.6px">Animation</div>
</div>
</div>
<div class="a" style="left:3px;top:41px;width:1437px;height:899px;border-radius:8px;border:1px solid rgba(255,255,255,.1);z-index:5"></div>
<div class="a" style="left:1445px;top:41px;width:472px;height:177px;border-radius:8px;border:1px solid rgba(255,255,255,.07);z-index:5"></div>
<div class="a" style="left:1445px;top:223px;width:472px;height:760px;border-radius:8px;border:1px solid rgba(255,255,255,.07);z-index:5"></div>
<div class="a" style="left:3px;top:945px;width:1437px;height:40px;border-radius:8px;border:1px solid rgba(255,255,255,.07);z-index:5"></div>
<div id="ol"><div class="a" style="left:-1445px;top:-41px;width:1919px;height:969px">
<div class="a" style="left:1445px;top:60px;width:472px;height:29px;background:#2b2b2b"></div>
<div class="a" style="left:1445px;top:89px;width:472px;height:29px;background:#282828"></div>
<div class="a" style="left:1445px;top:118px;width:472px;height:29px;background:#2b2b2b"></div>
<div class="a" style="left:1445px;top:147px;width:472px;height:29px;background:#282828"></div>
<div class="a" style="left:1445px;top:176px;width:472px;height:29px;background:#2b2b2b"></div>
<div class="a" style="left:1445px;top:205px;width:472px;height:29px;background:#282828"></div>
<div class="a" style="left:1488px;top:79px;width:1px;height:140px;background:#4a4a4a"></div>
<div class="a" style="left:1462px;top:71.7px;width:5.6px;height:5.6px;border-radius:50%;background:#e6e6e6"></div>
<svg class="ic" style="left:1513px;top:67.5px" width="10" height="14"><path d="M2 1.5L8 7L2 12.5" stroke="#d0d0d0" stroke-width="1.4" fill="none"/></svg>
<svg class="ic" style="left:1537px;top:64.0px" width="22" height="21" viewBox="0 0 22 21"><path d="M2.5 2.5H19.5L11 19Z" stroke="#cc8447" stroke-width="4" stroke-linejoin="round" fill="none"/></svg>
<div class="t" style="left:1567px;top:67.7px;color:#d0d0d0">Cylinder.002</div>
<svg class="ic" style="left:1700px;top:78.5px" width="20" height="10"><path d="M3 2Q6 9 13 3" stroke="#5a7fd0" stroke-width="1.5" fill="none"/></svg>
<div class="a" style="left:1740px;top:78.0px;width:6px;height:6px;border:1.5px solid #1fbf8d"></div>
<svg class="ic" style="left:1849px;top:64.0px" width="22" height="20" viewBox="0 0 22 20"><path d="M0.5 10Q10.5 0 20.5 10Q10.5 20 0.5 10Z" fill="#e6e6e6"/><circle cx="10.5" cy="10" r="4.6" fill="#282828"/><circle cx="10.5" cy="10" r="2" fill="#e6e6e6"/></svg>
<svg class="ic" style="left:1878px;top:64.0px" width="22" height="20" viewBox="0 0 22 20"><path d="M0.5 4H6L7.5 1.5H13.5L15 4H20.5V18.5H0.5Z" fill="#e6e6e6"/><circle cx="10.5" cy="11" r="5" fill="#282828"/><circle cx="10.5" cy="11" r="3.6" fill="#e6e6e6"/><circle cx="10.5" cy="11" r="2.6" fill="#282828"/></svg>
<div class="a" style="left:1462px;top:100.7px;width:5.6px;height:5.6px;border-radius:50%;background:#e6e6e6"></div>
<svg class="ic" style="left:1513px;top:96.5px" width="10" height="14"><path d="M2 1.5L8 7L2 12.5" stroke="#d0d0d0" stroke-width="1.4" fill="none"/></svg>
<svg class="ic" style="left:1537px;top:93.0px" width="22" height="21" viewBox="0 0 22 21"><path d="M2.5 2.5H19.5L11 19Z" stroke="#cc8447" stroke-width="4" stroke-linejoin="round" fill="none"/></svg>
<div class="t" style="left:1567px;top:96.7px;color:#d0d0d0">Cylinder.003</div>
<svg class="ic" style="left:1701px;top:92.5px" width="22" height="22" viewBox="0 0 22 22"><path d="M3 3H19L11 19Z" stroke="#1fbf8d" stroke-width="1.5" fill="none"/><g fill="#282828" stroke="#1fbf8d" stroke-width="1.4"><rect x="0.8" y="0.8" width="4" height="4"/><rect x="17.2" y="0.8" width="4" height="4"/><rect x="9" y="17" width="4" height="4"/></g></svg>
<svg class="ic" style="left:1849px;top:93.0px" width="22" height="20" viewBox="0 0 22 20"><path d="M0.5 10Q10.5 0 20.5 10Q10.5 20 0.5 10Z" fill="#e6e6e6"/><circle cx="10.5" cy="10" r="4.6" fill="#282828"/><circle cx="10.5" cy="10" r="2" fill="#e6e6e6"/></svg>
<svg class="ic" style="left:1878px;top:93.0px" width="22" height="20" viewBox="0 0 22 20"><path d="M0.5 4H6L7.5 1.5H13.5L15 4H20.5V18.5H0.5Z" fill="#e6e6e6"/><circle cx="10.5" cy="11" r="5" fill="#282828"/><circle cx="10.5" cy="11" r="3.6" fill="#e6e6e6"/><circle cx="10.5" cy="11" r="2.6" fill="#282828"/></svg>
<div class="a" style="left:1462px;top:129.7px;width:5.6px;height:5.6px;border-radius:50%;background:#e6e6e6"></div>
<svg class="ic" style="left:1513px;top:125.5px" width="10" height="14"><path d="M2 1.5L8 7L2 12.5" stroke="#d0d0d0" stroke-width="1.4" fill="none"/></svg>
<svg class="ic" style="left:1537px;top:122.0px" width="22" height="21" viewBox="0 0 22 21"><path d="M2.5 2.5H19.5L11 19Z" stroke="#cc8447" stroke-width="4" stroke-linejoin="round" fill="none"/></svg>
<div class="t" style="left:1567px;top:125.7px;color:#d0d0d0">Cylinder.004</div>
<svg class="ic" style="left:1701px;top:121.5px" width="22" height="22" viewBox="0 0 22 22"><path d="M3 3H19L11 19Z" stroke="#1fbf8d" stroke-width="1.5" fill="none"/><g fill="#282828" stroke="#1fbf8d" stroke-width="1.4"><rect x="0.8" y="0.8" width="4" height="4"/><rect x="17.2" y="0.8" width="4" height="4"/><rect x="9" y="17" width="4" height="4"/></g></svg>
<svg class="ic" style="left:1849px;top:122.0px" width="22" height="20" viewBox="0 0 22 20"><path d="M0.5 10Q10.5 0 20.5 10Q10.5 20 0.5 10Z" fill="#e6e6e6"/><circle cx="10.5" cy="10" r="4.6" fill="#282828"/><circle cx="10.5" cy="10" r="2" fill="#e6e6e6"/></svg>
<svg class="ic" style="left:1878px;top:122.0px" width="22" height="20" viewBox="0 0 22 20"><path d="M0.5 4H6L7.5 1.5H13.5L15 4H20.5V18.5H0.5Z" fill="#e6e6e6"/><circle cx="10.5" cy="11" r="5" fill="#282828"/><circle cx="10.5" cy="11" r="3.6" fill="#e6e6e6"/><circle cx="10.5" cy="11" r="2.6" fill="#282828"/></svg>
<div class="a" style="left:1462px;top:158.7px;width:5.6px;height:5.6px;border-radius:50%;background:#e6e6e6"></div>
<svg class="ic" style="left:1513px;top:154.5px" width="10" height="14"><path d="M2 1.5L8 7L2 12.5" stroke="#d0d0d0" stroke-width="1.4" fill="none"/></svg>
<svg class="ic" style="left:1537px;top:151.0px" width="22" height="21" viewBox="0 0 22 21"><path d="M2.5 2.5H19.5L11 19Z" stroke="#cc8447" stroke-width="4" stroke-linejoin="round" fill="none"/></svg>
<div class="t" style="left:1567px;top:154.7px;color:#d0d0d0">Cylinder.005</div>
<svg class="ic" style="left:1701px;top:150.5px" width="22" height="22" viewBox="0 0 22 22"><path d="M3 3H19L11 19Z" stroke="#1fbf8d" stroke-width="1.5" fill="none"/><g fill="#282828" stroke="#1fbf8d" stroke-width="1.4"><rect x="0.8" y="0.8" width="4" height="4"/><rect x="17.2" y="0.8" width="4" height="4"/><rect x="9" y="17" width="4" height="4"/></g></svg>
<svg class="ic" style="left:1849px;top:151.0px" width="22" height="20" viewBox="0 0 22 20"><path d="M0.5 10Q10.5 0 20.5 10Q10.5 20 0.5 10Z" fill="#e6e6e6"/><circle cx="10.5" cy="10" r="4.6" fill="#282828"/><circle cx="10.5" cy="10" r="2" fill="#e6e6e6"/></svg>
<svg class="ic" style="left:1878px;top:151.0px" width="22" height="20" viewBox="0 0 22 20"><path d="M0.5 4H6L7.5 1.5H13.5L15 4H20.5V18.5H0.5Z" fill="#e6e6e6"/><circle cx="10.5" cy="11" r="5" fill="#282828"/><circle cx="10.5" cy="11" r="3.6" fill="#e6e6e6"/><circle cx="10.5" cy="11" r="2.6" fill="#282828"/></svg>
<div class="a" style="left:1462px;top:187.7px;width:5.6px;height:5.6px;border-radius:50%;background:#e6e6e6"></div>
<svg class="ic" style="left:1513px;top:183.5px" width="10" height="14"><path d="M2 1.5L8 7L2 12.5" stroke="#d0d0d0" stroke-width="1.4" fill="none"/></svg>
<svg class="ic" style="left:1537px;top:180.0px" width="22" height="21" viewBox="0 0 22 21"><path d="M2.5 2.5H19.5L11 19Z" stroke="#cc8447" stroke-width="4" stroke-linejoin="round" fill="none"/></svg>
<div class="t" style="left:1567px;top:183.7px;color:#d0d0d0">Cylinder.006</div>
<svg class="ic" style="left:1701px;top:179.5px" width="22" height="22" viewBox="0 0 22 22"><path d="M3 3H19L11 19Z" stroke="#1fbf8d" stroke-width="1.5" fill="none"/><g fill="#282828" stroke="#1fbf8d" stroke-width="1.4"><rect x="0.8" y="0.8" width="4" height="4"/><rect x="17.2" y="0.8" width="4" height="4"/><rect x="9" y="17" width="4" height="4"/></g></svg>
<svg class="ic" style="left:1849px;top:180.0px" width="22" height="20" viewBox="0 0 22 20"><path d="M0.5 10Q10.5 0 20.5 10Q10.5 20 0.5 10Z" fill="#e6e6e6"/><circle cx="10.5" cy="10" r="4.6" fill="#282828"/><circle cx="10.5" cy="10" r="2" fill="#e6e6e6"/></svg>
<svg class="ic" style="left:1878px;top:180.0px" width="22" height="20" viewBox="0 0 22 20"><path d="M0.5 4H6L7.5 1.5H13.5L15 4H20.5V18.5H0.5Z" fill="#e6e6e6"/><circle cx="10.5" cy="11" r="5" fill="#282828"/><circle cx="10.5" cy="11" r="3.6" fill="#e6e6e6"/><circle cx="10.5" cy="11" r="2.6" fill="#282828"/></svg>
<div class="a" style="left:1462px;top:216.7px;width:5.6px;height:5.6px;border-radius:50%;background:#e6e6e6"></div>
<svg class="ic" style="left:1513px;top:212.5px" width="10" height="14"><path d="M2 1.5L8 7L2 12.5" stroke="#d0d0d0" stroke-width="1.4" fill="none"/></svg>
<svg class="ic" style="left:1537px;top:209.0px" width="22" height="21" viewBox="0 0 22 21"><path d="M2.5 2.5H19.5L11 19Z" stroke="#cc8447" stroke-width="4" stroke-linejoin="round" fill="none"/></svg>
<div class="t" style="left:1567px;top:212.7px;color:#d0d0d0">Icosphere</div>
<svg class="ic" style="left:1669px;top:208.5px" width="22" height="22" viewBox="0 0 22 22"><path d="M3 3H19L11 19Z" stroke="#1fbf8d" stroke-width="1.5" fill="none"/><g fill="#282828" stroke="#1fbf8d" stroke-width="1.4"><rect x="0.8" y="0.8" width="4" height="4"/><rect x="17.2" y="0.8" width="4" height="4"/><rect x="9" y="17" width="4" height="4"/></g></svg>
<svg class="ic" style="left:1849px;top:209.0px" width="22" height="20" viewBox="0 0 22 20"><path d="M0.5 10Q10.5 0 20.5 10Q10.5 20 0.5 10Z" fill="#e6e6e6"/><circle cx="10.5" cy="10" r="4.6" fill="#282828"/><circle cx="10.5" cy="10" r="2" fill="#e6e6e6"/></svg>
<svg class="ic" style="left:1878px;top:209.0px" width="22" height="20" viewBox="0 0 22 20"><path d="M0.5 4H6L7.5 1.5H13.5L15 4H20.5V18.5H0.5Z" fill="#e6e6e6"/><circle cx="10.5" cy="11" r="5" fill="#282828"/><circle cx="10.5" cy="11" r="3.6" fill="#e6e6e6"/><circle cx="10.5" cy="11" r="2.6" fill="#282828"/></svg>
<div class="a" style="left:1908.5px;top:101px;width:5px;height:40px;border-radius:3px;background:#3f3f3f"></div>
<div class="a" style="left:1445px;top:41px;width:472px;height:38px;background:#2d2d2d;box-shadow:0 1px 2px rgba(0,0,0,.25)"></div>
<div class="b" style="left:1458px;top:45.5px;width:46px;height:28px;border:1px solid #3c3c3c"></div>
<svg class="ic" style="left:1455px;top:44px" width="50" height="32" viewBox="1455 44 50 32"><rect x="1465" y="49.5" width="8.3" height="4.3" rx="1" fill="#e0e0e0"/><path d="M1469.1 53.8V68.4H1476M1469.1 60.7H1476" stroke="#a8a8a8" stroke-width="1.2" fill="none"/><rect x="1475.9" y="58.3" width="10.8" height="4.9" rx="1" fill="#e0e0e0"/><rect x="1475.9" y="66" width="10.8" height="4.7" rx="1" fill="#e0e0e0"/><path d="M1490.1 58.4L1494.5 63L1499 58.4" stroke="#e0e0e0" stroke-width="1.5" fill="none"/></svg>

<div class="b" style="left:1511px;top:45.5px;width:46px;height:28px;border:1px solid #3c3c3c"></div>
<svg class="ic" style="left:1510px;top:44px" width="48" height="32" viewBox="1510 44 48 32"><path d="M1518.5 54V66.5H1535.5M1515.8 56.5V69H1533" stroke="#c8c8c8" stroke-width="1.2" fill="none"/><rect x="1521.3" y="50.2" width="18.3" height="13.6" stroke="#e6e6e6" stroke-width="1.5" fill="none"/><path d="M1522.5 62.5L1527.5 54L1532.5 62.5Z" fill="#e6e6e6"/><circle cx="1535.5" cy="53.8" r="1.4" fill="#e6e6e6"/><path d="M1543 58.4L1547.4 63L1551.8 58.4" stroke="#e0e0e0" stroke-width="1.5" fill="none"/></svg>

<div class="b" style="left:1579.5px;top:45.5px;width:173px;height:28px;background:#1d1d1d;border:1px solid #2f2f2f"></div>
<svg class="ic" style="left:1585px;top:48px" width="24" height="24" viewBox="0 0 24 24"><circle cx="9.5" cy="9.5" r="6.3" stroke="#e6e6e6" stroke-width="1.5" fill="none"/><path d="M14 14L20.5 20.5" stroke="#e6e6e6" stroke-width="1.6"/></svg>
<div class="t" style="left:1618px;top:51.5px;color:#7c7c7c">Search</div>
<div class="b" style="left:1823px;top:45.5px;width:46px;height:28px;border:1px solid #3c3c3c"></div>
<svg class="ic" style="left:1825px;top:48px" width="24" height="24" viewBox="0 0 24 24"><path d="M2.5 3.5H21.5L14 13V21.5L10.5 19V13Z" stroke="#e6e6e6" stroke-width="1.4" stroke-linejoin="round" fill="none"/></svg>
<svg class="ic" style="left:1854px;top:57px" width="10" height="6"><path d="M1 1L5 5L9 1" stroke="#d8d8d8" stroke-width="1.4" fill="none"/></svg>
<div class="b" style="left:1877px;top:45.5px;width:27px;height:28px;background:#474747"></div>
<svg class="ic" style="left:1879px;top:48px" width="24" height="24" viewBox="0 0 24 24"><path d="M3 8.5H13M4.5 11V20H16V13" stroke="#bdbdbd" stroke-width="1.2" fill="none"/><rect x="8.5" y="13" width="4" height="1.5" fill="#bdbdbd"/><circle cx="17.5" cy="5.5" r="4.3" fill="#f0f0f0"/><path d="M17.5 3V8M15 5.5H20" stroke="#474747" stroke-width="1.3"/></svg>
</div></div>
<div id="pr"><div class="a" style="left:-1445px;top:-223px;width:1919px;height:969px">
<div class="a" style="left:1445px;top:261px;width:44px;height:710px;background:#1a1a1a"></div>
<div class="a" style="left:1450px;top:273px;width:39px;height:40px;border-radius:6px 0 0 6px;background:#232323"></div>
<div class="a" style="left:1450px;top:325px;width:39px;height:200px;border-radius:6px 0 0 6px;background:#232323"></div>
<div class="a" style="left:1450px;top:537px;width:39px;height:39px;border-radius:6px 0 0 6px;background:#232323"></div>
<div class="a" style="left:1450px;top:590px;width:39px;height:279px;border-radius:6px 0 0 6px;background:#232323"></div>
<div class="a" style="left:1450px;top:631px;width:39px;height:37px;border-radius:6px 0 0 6px;background:#303030"></div>
<div class="b" style="left:1458.5px;top:227.5px;width:45px;height:28px;border:1px solid #3c3c3c;background:#2a2a2a"></div>
<svg class="ic" style="left:1455px;top:224px" width="55" height="35" viewBox="1455 224 55 35"><g stroke="#e6e6e6" stroke-width="1.5" fill="#282828"><rect x="1466.2" y="232.1" width="19.5" height="7.4" rx="3.7"/><rect x="1466.2" y="244.4" width="19.5" height="7.4" rx="3.7"/></g><path d="M1469.9 232.1H1474.5V239.5H1469.9A3.7 3.7 0 0 1 1469.9 232.1Z M1469.9 244.4H1478.8V251.8H1469.9A3.7 3.7 0 0 1 1469.9 244.4Z" fill="#e6e6e6"/><path d="M1489.7 240L1494.4 245L1499 240" stroke="#e0e0e0" stroke-width="1.6" fill="none"/></svg>

<div class="b" style="left:1596px;top:227.5px;width:172px;height:28px;background:#1d1d1d;border:1px solid #2f2f2f"></div>
<svg class="ic" style="left:1601px;top:230px" width="24" height="24" viewBox="0 0 24 24"><circle cx="9.5" cy="9.5" r="6.3" stroke="#e6e6e6" stroke-width="1.5" fill="none"/><path d="M14 14L20.5 20.5" stroke="#e6e6e6" stroke-width="1.6"/></svg>
<div class="t" style="left:1634px;top:233.5px;color:#7c7c7c">Search</div>
<div class="b" style="left:1876.5px;top:227.5px;width:28px;height:28px;border:1px solid #3c3c3c;background:#2a2a2a"></div>
<svg class="ic" style="left:1885.5px;top:239px" width="10" height="6"><path d="M1 1L5 5L9 1" stroke="#d8d8d8" stroke-width="1.4" fill="none"/></svg>
<svg class="a" style="left:1445px;top:261px" width="44" height="708" viewBox="1445 261 44 708">
<g fill="#c8c8c8"><path d="M1461 282.5V294" stroke="#c8c8c8" stroke-width="1.8"/><ellipse cx="1461" cy="298" rx="3.3" ry="4"/><path d="M1472.5 281.5V284.5L1474 286L1475.5 284.5V281.5Q1479 283 1478.5 287Q1478 289.5 1476.5 290V302Q1476.5 303.5 1474 303.5Q1471.5 303.5 1471.5 302V290Q1470 289.5 1469.5 287Q1469 283 1472.5 281.5Z"/></g>
<path d="M1458.5 338.5Q1458.5 336.5 1460.5 336.5H1477.5Q1479.5 336.5 1479.5 338.5V351.5Q1479.5 353.5 1477.5 353.5H1460.5Q1458.5 353.5 1458.5 351.5Z" fill="#c8c8c8"/><path d="M1463.5 336.5V333.5H1470.5V336.5M1474.5 333H1477" stroke="#c8c8c8" stroke-width="1.4" fill="none"/><path d="M1461.5 341H1472M1461.5 344.5H1472M1461.5 348H1472" stroke="#262626" stroke-width="1.4"/><circle cx="1475.5" cy="341.5" r="1.2" fill="#262626"/><circle cx="1475.5" cy="347" r="1.2" fill="#262626"/>
<path d="M1459 378Q1459 374.5 1462 374.5H1476Q1479 374.5 1479 378V382H1459Z" fill="#c8c8c8"/><path d="M1463 384H1475V394H1463Z" fill="#c8c8c8"/><path d="M1464.5 392.5L1469 387L1473.5 392.5Z" fill="#262626"/>
<path d="M1461 418V431H1474M1459 420V433H1472" stroke="#bdbdbd" stroke-width="1.1" fill="none"/><rect x="1463.5" y="415" width="14" height="14" stroke="#c8c8c8" stroke-width="1.4" fill="none"/><path d="M1465 428L1469 420L1473 426L1475 424V428Z" fill="#c8c8c8"/><circle cx="1474.5" cy="418.5" r="1.2" fill="#c8c8c8"/>
<path d="M1464 454L1459.5 463Q1458 467 1461 469.5Q1464 471 1466 469.5" fill="#c8c8c8"/><circle cx="1476" cy="457" r="2.5" fill="#c8c8c8"/><circle cx="1472" cy="467" r="5.3" stroke="#c8c8c8" stroke-width="1.6" fill="#262626"/>
<circle cx="1469" cy="505" r="9.6" stroke="#b95a64" stroke-width="1.6" fill="none"/><path d="M1460.5 500.5Q1463 496.5 1466 496.5L1467 498.5L1470 499.5L1470.5 501L1467.5 503.5L1465 504.5L1464.5 507.5L1462.5 507Q1460.5 504 1460.5 500.5Z M1466.5 506L1471.5 506.5L1474 509L1472 512.5L1468.5 513.5L1467.5 510Z" fill="#b95a64"/><path d="M1459 514.8L1461.5 512.3M1476.7 497.7L1479.3 495.1" stroke="#b95a64" stroke-width="1.6"/>
<path d="M1459.5 548H1478.5V552H1459.5Z" stroke="#c8c8c8" stroke-width="1.5" fill="none"/><path d="M1461 552V564H1477V552" stroke="#c8c8c8" stroke-width="1.5" fill="none"/><rect x="1466.5" y="555" width="5" height="2" rx="1" fill="#c8c8c8"/>
<rect x="1463" y="602" width="11" height="11" fill="#d1843d"/><path d="M1459.5 603V599H1463.5M1473.5 599H1477.5V603M1477.5 612.5V616.5H1473.5M1463.5 616.5H1459.5V612.5" stroke="#d1843d" stroke-width="1.4" fill="none"/>
<path d="M1460 657.3L1468.5 648.8" stroke="#6d9ef6" stroke-width="4.6" stroke-linecap="round"/><path d="M1471.5 637.6A7.6 7.6 0 1 0 1479.6 645.3L1475.6 647.6L1470.5 642.3Z" fill="#6d9ef6"/>
<g fill="#5b86d2"><circle cx="1462.4" cy="682.1" r="3.7"/><circle cx="1477.3" cy="682.1" r="2.2"/><circle cx="1462.4" cy="697.4" r="2.2"/><circle cx="1476.4" cy="696.5" r="3"/></g><path d="M1467.6 682.1H1476M1462.4 687V696M1466 686L1474.5 694.5" stroke="#5b86d2" stroke-width="1.4"/>
<path d="M1474 722.5A8.5 8.5 0 1 0 1476.5 734" stroke="#5a8ee0" stroke-width="1.6" fill="none"/><circle cx="1468" cy="729" r="3.7" fill="#5a8ee0"/><circle cx="1477" cy="721.5" r="2.3" fill="#5a8ee0"/>
<path d="M1477 761Q1480 763 1477 768L1471 776Q1466 781 1461 777Q1458 772 1462 767L1471 762Q1475 759 1477 761Z" stroke="#5a8ee0" stroke-width="1.6" fill="none"/><circle cx="1466.5" cy="771.5" r="4" stroke="#5a8ee0" stroke-width="1.6" fill="none"/><circle cx="1466.5" cy="771.5" r="1.5" fill="#5a8ee0"/><circle cx="1474.5" cy="763.5" r="1" fill="#5a8ee0"/>
<path d="M1461 800H1477L1469 816Z" stroke="#1fbf8d" stroke-width="1.5" fill="none"/><g fill="#262626" stroke="#1fbf8d" stroke-width="1.4"><rect x="1459" y="798" width="4" height="4"/><rect x="1475" y="798" width="4" height="4"/><rect x="1467" y="814" width="4" height="4"/></g>
<circle cx="1469" cy="849" r="9.6" stroke="#b95a64" stroke-width="1.6" fill="none"/><path d="M1469 839.5A9.5 9.5 0 0 1 1478 849Q1474 851.8 1469 852Z" fill="#b95a64"/><path d="M1459.5 848.5Q1464 851.5 1469 852V858.5A9.5 9.5 0 0 1 1459.5 848.5Z" fill="#b95a64"/><path d="M1463.5 901L1468 905L1472.5 901" stroke="#5a5a5a" stroke-width="1.4" fill="none"/>
</svg>
<svg class="ic" style="left:1503px;top:276px" width="24" height="24" viewBox="0 0 24 24"><rect x="6" y="6" width="12" height="12" fill="#e6e6e6"/><path d="M2 6V2H6M18 2H22V6M22 18V22H18M6 22H2V18" stroke="#c8c8c8" stroke-width="1.4" fill="none"/></svg>
<div class="t" style="left:1540px;top:279.5px">Cube.025</div>
<svg class="ic" style="left:1640px;top:280px" width="10" height="16"><path d="M2 2L8 8L2 14" stroke="#d8d8d8" stroke-width="1.5" fill="none"/></svg>
<svg class="ic" style="left:1663px;top:277px" width="22" height="22" viewBox="0 0 22 22"><rect x="1" y="1" width="20" height="20" stroke="#a8a8a8" stroke-width="1.2" fill="none"/><circle cx="11" cy="11" r="6.5" stroke="#e6e6e6" stroke-width="1.6" fill="none"/></svg>
<div class="t" style="left:1699px;top:279.5px">Subdivision</div>
<svg class="ic" style="left:1878px;top:276px" width="24" height="24" viewBox="0 0 24 24"><path d="M15 2L22 9L20 10L17 9L12.5 13.5L13 17L11.5 18.5L5.5 12.5L7 11L10.5 11.5L15 7L14 4Z" stroke="#c8c8c8" stroke-width="1.3" fill="none"/><path d="M8.5 15.5L2 22" stroke="#c8c8c8" stroke-width="1.3"/></svg>
<div class="b" style="left:1502px;top:327px;width:402px;height:27.5px;background:#4d4d4d"></div>
<svg class="ic" style="left:1510px;top:332px" width="18" height="18"><path d="M9 2V16M2 9H16" stroke="#e6e6e6" stroke-width="1.4"/></svg>
<div class="t" style="left:1666px;top:332.2px">Add Modifier</div>
<div class="a" style="left:1500.5px;top:370px;width:403.5px;height:252px;border-radius:7px;background:#3d3d3d;border:1.5px solid #4772b3"></div>
<svg class="ic" style="left:1514px;top:385px" width="12" height="8"><path d="M1 1.5L6 6.5L11 1.5" stroke="#dcdcdc" stroke-width="1.4" fill="none"/></svg>
<svg class="ic" style="left:1532px;top:377px" width="22" height="22" viewBox="0 0 22 22"><rect x="1" y="1" width="20" height="20" stroke="#a8a8a8" stroke-width="1.2" fill="none"/><circle cx="11" cy="11" r="6.5" stroke="#e6e6e6" stroke-width="1.6" fill="none"/></svg>
<div class="b" style="left:1571px;top:375.5px;width:258px;height:27.5px;background:#1d1d1d"></div>
<div class="t" style="left:1582px;top:380.5px;color:#fff">Subdivision</div>
<div class="a" style="left:1684px;top:375.5px;width:29px;height:27.5px;background:#545454"></div>
<div class="a" style="left:1713px;top:375.5px;width:87px;height:27.5px;background:#4772b3"></div>
<div class="a" style="left:1742px;top:375.5px;width:1px;height:27.5px;background:#3a5e96"></div><div class="a" style="left:1771px;top:375.5px;width:1px;height:27.5px;background:#3a5e96"></div>
<svg class="ic" style="left:1687px;top:378px" width="22" height="22" viewBox="0 0 22 22"><path d="M3 3H19L11 19Z" stroke="#e6e6e6" stroke-width="1.4" fill="none"/><g fill="#545454" stroke="#e6e6e6" stroke-width="1.3"><rect x="1" y="1" width="4" height="4"/><rect x="17" y="1" width="4" height="4"/><rect x="9" y="17" width="4" height="4"/></g></svg>
<svg class="ic" style="left:1716px;top:378px" width="22" height="22" viewBox="0 0 22 22"><g stroke="#e6e6e6" stroke-width="1.2" fill="none"><rect x="1" y="4" width="4" height="4"/><rect x="1" y="17" width="4" height="4"/><rect x="15" y="17" width="4" height="4"/><path d="M3 8V17M5 19H15M17 9V17M5 6H12"/></g><rect x="14.5" y="2" width="6" height="6" fill="#fff"/></svg>
<svg class="ic" style="left:1745px;top:378px" width="22" height="22" viewBox="0 0 22 22"><rect x="1.5" y="3" width="19" height="12.5" rx="1" stroke="#fff" stroke-width="1.5" fill="none"/><path d="M11 15.5V19M6 19.5H16" stroke="#fff" stroke-width="1.5"/><rect x="4" y="5.5" width="14" height="7.5" fill="#fff" opacity=".9"/></svg>
<svg class="ic" style="left:1774px;top:378px" width="22" height="22" viewBox="0 0 22 22"><path d="M1.5 6H6.5L8 3.5H14L15.5 6H20.5V18.5H1.5Z" fill="#fff"/><circle cx="11" cy="12" r="4.6" fill="#4772b3"/><circle cx="11" cy="12" r="2.7" fill="#fff"/></svg>
<div class="a" style="left:1800px;top:375.5px;width:29px;height:27.5px;border-radius:0 5px 5px 0;background:#1d1d1d"></div>
<svg class="ic" style="left:1808px;top:385px" width="14" height="9"><path d="M1 1.5L7 7.5L13 1.5" stroke="#dcdcdc" stroke-width="1.6" fill="none"/></svg>
<svg class="ic" style="left:1838px;top:382px" width="14" height="14"><path d="M1.5 1.5L12.5 12.5M12.5 1.5L1.5 12.5" stroke="#dcdcdc" stroke-width="1.6"/></svg>
<svg class="ic" style="left:1873px;top:385px" width="18" height="8"><g fill="#777"><circle cx="1.5" cy="1.5" r="1"/><circle cx="6" cy="1.5" r="1"/><circle cx="10.5" cy="1.5" r="1"/><circle cx="15" cy="1.5" r="1"/><circle cx="1.5" cy="6" r="1"/><circle cx="6" cy="6" r="1"/><circle cx="10.5" cy="6" r="1"/><circle cx="15" cy="6" r="1"/></g></svg>
<div class="b" style="left:1513px;top:418.5px;width:378px;height:26.5px;background:#545454"></div>
<div class="b" style="left:1513px;top:418.5px;width:188.5px;height:26.5px;border-radius:5px 0 0 5px;background:#4772b3"></div>
<div class="t" style="left:1551px;top:423.2px;color:#fff">Catmull-&#8202;Clark</div>
<div class="t" style="left:1770px;top:423.2px">Simple</div>
<div class="t" style="left:1521px;top:459.5px">Levels Viewport</div>
<div class="t" style="left:1589px;top:488.5px">Render</div>
<div class="b" style="left:1660px;top:454px;width:202px;height:56px;background:#545454"></div>
<div class="a" style="left:1660px;top:481.5px;width:202px;height:1px;background:#3d3d3d"></div>
<div class="t" style="left:1755px;top:459.5px">3</div>
<div class="t" style="left:1755px;top:488.5px">2</div>
<div class="a" style="left:1875px;top:465.0px;width:5px;height:5px;border-radius:50%;background:#e0e0e0"></div>
<div class="a" style="left:1875px;top:494.0px;width:5px;height:5px;border-radius:50%;background:#e0e0e0"></div>
<div class="a" style="left:1875px;top:530.0px;width:5px;height:5px;border-radius:50%;background:#e0e0e0"></div>
<div class="b" style="left:1660px;top:523px;width:18.5px;height:19px;border-radius:4px;background:#4772b3"></div>
<svg class="ic" style="left:1662px;top:526px" width="15" height="13"><path d="M2 6.5L5.5 10L13 2.5" stroke="#fff" stroke-width="2" fill="none"/></svg>
<div class="t" style="left:1684px;top:525px">Optimal Display</div>
<svg class="ic" style="left:1522px;top:560px" width="10" height="16"><path d="M2 2L8 8L2 14" stroke="#d8d8d8" stroke-width="1.5" fill="none"/></svg>
<div class="b" style="left:1542px;top:560px;width:19px;height:18px;border-radius:4px;background:#545454"></div>
<div class="t" style="left:1566px;top:561px">Adaptive Subdivision</div>
<svg class="ic" style="left:1522px;top:594px" width="10" height="16"><path d="M2 2L8 8L2 14" stroke="#d8d8d8" stroke-width="1.5" fill="none"/></svg>
<div class="t" style="left:1542px;top:595px">Advanced</div>
</div></div>
<div id="tl"><div class="a" style="left:-3px;top:-945px;width:1919px;height:969px">
<div class="b" style="left:15.5px;top:950px;width:45px;height:28px;border:1px solid #3c3c3c"></div>
<svg class="ic" style="left:20px;top:953px" width="24" height="24" viewBox="0 0 24 24"><circle cx="11" cy="12" r="9" fill="#e6e6e6"/><path d="M14 6L9 11.5L13 17" stroke="#303030" stroke-width="3" fill="none"/></svg>
<svg class="ic" style="left:46px;top:964px" width="10" height="6"><path d="M1 1L5 5L9 1" stroke="#d8d8d8" stroke-width="1.4" fill="none"/></svg>
<div class="t" style="left:79.5px;top:955.8px">View</div>
<div class="t" style="left:139px;top:955.8px">Marker</div>
<div class="b" style="left:212.5px;top:950px;width:104.5px;height:28px;background:#282828;border:1px solid #333"></div>
<div class="t" style="left:224px;top:955.8px">Playback</div>
<svg class="ic" style="left:303px;top:963px" width="10" height="6"><path d="M1 1L5 5L9 1" stroke="#d8d8d8" stroke-width="1.4" fill="none"/></svg>
<div class="b" style="left:507px;top:950px;width:55.5px;height:28px;background:#2c2c2c;border:1px solid #333"></div>
<div class="b" style="left:507px;top:950px;width:27px;height:28px;border-radius:5px 0 0 5px;background:#545454"></div>
<svg class="ic" style="left:510px;top:953px" width="22" height="22"><circle cx="11" cy="13" r="6.5" stroke="#a8a8a8" stroke-width="1.5" fill="none"/></svg>
<svg class="ic" style="left:543px;top:963px" width="10" height="6"><path d="M1 1L5 5L9 1" stroke="#5f5f5f" stroke-width="1.4" fill="none"/></svg>
<div class="b" style="left:572px;top:950px;width:172px;height:28px;background:#545454"></div>
<div class="a" style="left:599.5px;top:950px;width:1px;height:28px;background:#454545"></div>
<div class="a" style="left:628.75px;top:950px;width:1px;height:28px;background:#454545"></div>
<div class="a" style="left:657.5px;top:950px;width:1px;height:28px;background:#454545"></div>
<div class="a" style="left:686.25px;top:950px;width:1px;height:28px;background:#454545"></div>
<div class="a" style="left:715px;top:950px;width:1px;height:28px;background:#454545"></div>
<svg class="a" style="left:570px;top:950px" width="180" height="20" viewBox="570 950 180 20"><g fill="#e6e6e6"><rect x="579" y="957" width="2.5" height="14"/><path d="M593 957V971L582.5 964Z"/><path d="M609 957L603 964L609 971L615 964Z"/><path d="M624.5 957V971L616 964Z"/><path d="M651.5 955V973L636.5 964Z"/><path d="M664.5 955V973L679.5 964Z"/><path d="M690.5 957V971L699 964Z"/><path d="M706 957L700 964L706 971L712 964Z"/><path d="M722 957V971L732.5 964Z"/><rect x="734" y="957" width="2.5" height="14"/></g></svg>
<div class="b" style="left:752.5px;top:950px;width:85px;height:28px;background:#282828;border:1px solid #333"></div>
<div class="b" style="left:752.5px;top:950px;width:56.5px;height:28px;border-radius:5px 0 0 5px;background:#545454"></div>
<div class="a" style="left:780px;top:950px;width:1px;height:28px;background:#454545"></div>
<svg class="a" style="left:750px;top:950px" width="60" height="20" viewBox="750 950 60 20"><g fill="#e6e6e6"><path d="M769 957V971L758 964Z"/><rect x="771.5" y="957" width="2.5" height="14"/><rect x="786" y="957" width="2.5" height="14"/><path d="M791 957V971L802 964Z"/></g></svg>
<svg class="ic" style="left:819px;top:963px" width="10" height="6"><path d="M1 1L5 5L9 1" stroke="#d8d8d8" stroke-width="1.4" fill="none"/></svg>
<div class="b" style="left:846px;top:950px;width:57px;height:28px;background:#282828;border:1px solid #333"></div>
<div class="b" style="left:846px;top:950px;width:28px;height:28px;border-radius:5px 0 0 5px;background:#545454"></div>
<svg class="ic" style="left:849px;top:953px" width="22" height="22"><path d="M5 20V11A6 6 0 0 1 17 11V20M8.5 20V11.5A2.5 2.5 0 0 1 13.5 11.5V20" stroke="#a8a8a8" stroke-width="1.5" fill="none"/></svg>
<svg class="ic" style="left:884px;top:963px" width="10" height="6"><path d="M1 1L5 5L9 1" stroke="#d8d8d8" stroke-width="1.4" fill="none"/></svg>
<div class="b" style="left:951px;top:950px;width:106px;height:28px;background:#545454"></div>
<div class="t" style="left:993px;top:955.8px">70</div>
<div class="b" style="left:1066px;top:950px;width:280px;height:28px;background:#545454"></div>
<div class="a" style="left:1066px;top:950px;width:28px;height:28px;border-radius:5px 0 0 5px;background:#4a4a4a"></div>
<div class="a" style="left:1094px;top:950px;width:1px;height:28px;background:#444"></div><div class="a" style="left:1223px;top:950px;width:1px;height:28px;background:#444"></div>
<svg class="ic" style="left:1068px;top:952px" width="24" height="22"><circle cx="11" cy="14" r="7" stroke="#d8d8d8" stroke-width="1.5" fill="none"/><path d="M8 3.5H14M11 4V7M11 10V14H14.5M17 5L19 7" stroke="#d8d8d8" stroke-width="1.5" fill="none"/></svg>
<div class="t" style="left:1117px;top:955.8px">Start</div>
<div class="t" style="left:1191px;top:955.8px">1</div>
<div class="t" style="left:1246px;top:955.8px">End</div>
<div class="t" style="left:1294px;top:955.8px">250</div>
<div class="b" style="left:1371px;top:950px;width:56px;height:28px;background:#282828;border:1px solid #333"></div>
<div class="b" style="left:1371px;top:950px;width:27px;height:28px;border-radius:5px 0 0 5px;background:#4772b3"></div>
<svg class="ic" style="left:1373px;top:952px" width="24" height="24" viewBox="0 0 24 24"><circle cx="13" cy="10" r="7" fill="#f0f0f0"/><circle cx="9" cy="14" r="6" stroke="#f0f0f0" stroke-width="1.4" fill="none"/><path d="M11 9A3 3 0 0 1 15 8" stroke="#4772b3" stroke-width="1.2" fill="none"/></svg>
<svg class="ic" style="left:1408px;top:963px" width="10" height="6"><path d="M1 1L5 5L9 1" stroke="#d8d8d8" stroke-width="1.4" fill="none"/></svg>
</div></div>
</body></html>
